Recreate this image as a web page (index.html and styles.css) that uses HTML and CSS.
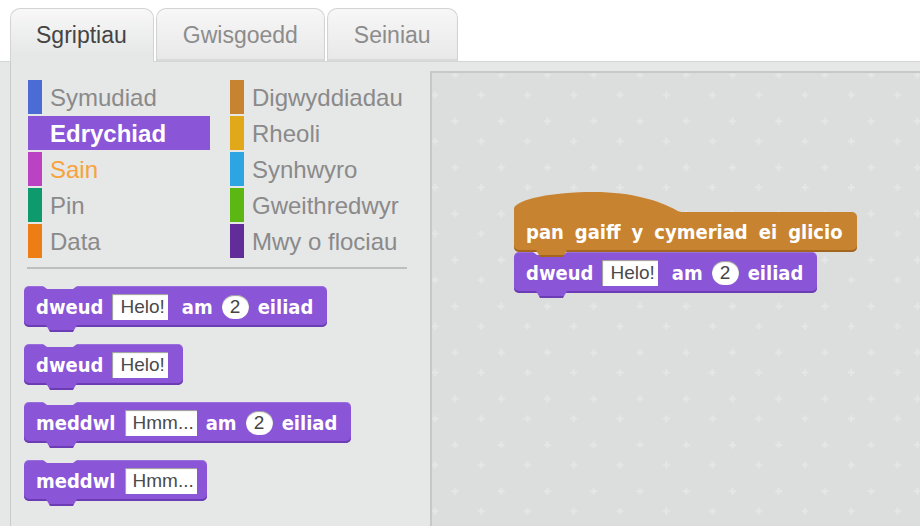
FILE: index.html
```html
<!DOCTYPE html>
<html lang="cy">
<head>
<meta charset="utf-8">
<title>Sgriptiau</title>
<link rel="stylesheet" href="styles.css">
</head>
<body>
<div class="app">
  <div class="tabs">
    <div class="tab active">Sgriptiau</div>
    <div class="tab">Gwisgoedd</div>
    <div class="tab">Seiniau</div>
  </div>
  <div class="pane">
    <div class="palette">
      <div class="cats">
        <div class="cat"><span class="bar c-motion"></span><span class="cat-name">Symudiad</span></div>
        <div class="cat"><span class="bar c-events"></span><span class="cat-name">Digwyddiadau</span></div>
        <div class="cat sel"><span class="bar c-looks"></span><span class="cat-name">Edrychiad</span></div>
        <div class="cat"><span class="bar c-control"></span><span class="cat-name">Rheoli</span></div>
        <div class="cat hover"><span class="bar c-sound"></span><span class="cat-name">Sain</span></div>
        <div class="cat"><span class="bar c-sensing"></span><span class="cat-name">Synhwyro</span></div>
        <div class="cat"><span class="bar c-pen"></span><span class="cat-name">Pin</span></div>
        <div class="cat"><span class="bar c-operators"></span><span class="cat-name">Gweithredwyr</span></div>
        <div class="cat"><span class="bar c-data"></span><span class="cat-name">Data</span></div>
        <div class="cat"><span class="bar c-more"></span><span class="cat-name">Mwy o flociau</span></div>
      </div>
      <div class="sep"></div>
      <div class="blocks">
        <div class="block looks"><span class="lbl">dweud</span><span class="inp inp-short">Helo!</span><span class="lbl">am</span><span class="num">2</span><span class="lbl">eiliad</span></div>
        <div class="block looks"><span class="lbl">dweud</span><span class="inp inp-short">Helo!</span></div>
        <div class="block looks"><span class="lbl">meddwl</span><span class="inp">Hmm...</span><span class="lbl">am</span><span class="num">2</span><span class="lbl">eiliad</span></div>
        <div class="block looks"><span class="lbl">meddwl</span><span class="inp">Hmm...</span></div>
      </div>
    </div>
    <div class="scripts">
      <svg class="grid" width="100%" height="100%" aria-hidden="true">
        <defs>
          <pattern id="crosses" patternUnits="userSpaceOnUse" x="-7" y="-8" width="46.25" height="46.25">
            <path d="M26.5 9h7v2h-7zM29 6.5h2v7h-2zM6.5 29h7v2h-7zM9 26.5h2v7h-2z" fill="#e5e6e6"/>
          </pattern>
        </defs>
        <rect width="100%" height="100%" fill="url(#crosses)"/>
      </svg>
      <div class="stack">
        <div class="block hat events">
          <svg class="hat-top" width="170" height="22" viewBox="0 0 170 22" aria-hidden="true"><path d="M0 22 L0 17 C4 8 38 1 80 1 C118 1 146 10 162 19 C164 20.5 166 21 170 21 L170 22 Z" fill="#c88330"/></svg>
          <span class="lbl">pan</span><span class="lbl">gaiff</span><span class="lbl">y</span><span class="lbl">cymeriad</span><span class="lbl">ei</span><span class="lbl">glicio</span>
        </div>
        <div class="block looks"><span class="lbl">dweud</span><span class="inp inp-short">Helo!</span><span class="lbl">am</span><span class="num">2</span><span class="lbl">eiliad</span></div>
      </div>
    </div>
  </div>
</div>
</body>
</html>
```
FILE: styles.css
```css
html, body {
  margin: 0;
  padding: 0;
  background: #ffffff;
}

body {
  width: 920px;
  height: 526px;
  overflow: hidden;
  font-family: "Liberation Sans", Arial, sans-serif;
}

.app {
  display: flex;
  flex-direction: column;
  height: 526px;
}

/* ---------- tabs ---------- */
.tabs {
  display: flex;
  align-items: flex-start;
  gap: 2px;
  padding: 8px 0 0 10px;
  height: 53px;
  border-bottom: 1px solid #d4d5d5;
}

.tab {
  box-sizing: border-box;
  height: 53px;
  padding: 0 26px;
  display: flex;
  align-items: center;
  border: 1px solid #d3d3d3;
  border-bottom: none;
  border-radius: 10px 10px 0 0;
  background: linear-gradient(#f7f7f7, #e8e8e8);
  box-shadow: inset 0 -2px 1px #d9d9d9;
  font-size: 23px;
  color: #8c8c8c;
}

.tab.active {
  position: relative;
  height: 54px;
  margin-bottom: -1px;
  padding: 0 26px 0 25px;
  color: #444444;
  background: linear-gradient(#f8f8f8, #e6e7e7 85%);
  box-shadow: none;
}

/* ---------- pane ---------- */
.pane {
  flex: 1;
  display: flex;
  background: #e6e7e7;
  min-height: 0;
}

.palette {
  box-sizing: border-box;
  width: 420px;
  margin-left: 10px;
  border-left: 1px solid #c9caca;
  padding: 18px 0 0 17px;
}

.cats {
  display: grid;
  grid-template-columns: 182px 182px;
  grid-auto-rows: 34px;
  column-gap: 20px;
  row-gap: 2px;
}

.cat {
  display: flex;
  align-items: stretch;
}

.bar {
  width: 14px;
  flex: none;
}

.cat-name {
  margin-left: 8px;
  font-size: 24px;
  line-height: 35px;
  color: #8a8a8a;
  white-space: nowrap;
}

.cat.sel {
  background: #8a55d7;
}

.cat.sel .cat-name {
  color: #ffffff;
  font-weight: bold;
}

.cat.hover .cat-name {
  color: #f7a33c;
}

.c-motion { background: #4a6cd4; }
.c-looks { background: #8a55d7; }
.c-sound { background: #bb42c3; }
.c-pen { background: #0e9a6c; }
.c-data { background: #ee7d16; }
.c-events { background: #c88330; }
.c-control { background: #e1a91a; }
.c-sensing { background: #2ca5e2; }
.c-operators { background: #5cb712; }
.c-more { background: #632d99; }

.sep {
  width: 380px;
  height: 2px;
  margin: 9px 0 0 -1px;
  background: #bebebe;
}

.blocks {
  display: flex;
  flex-direction: column;
  align-items: flex-start;
  gap: 17px;
  margin: 17px 0 0 -4px;
}

/* ---------- blocks ---------- */
.block {
  --c: #8a55d7;
  --d: #6c3cb5;
  --bg: #e6e7e7;
  position: relative;
  box-sizing: border-box;
  height: 41px;
  display: inline-flex;
  align-items: center;
  gap: 9px;
  padding: 0 10px 0 12px;
  background: var(--c);
  border-radius: 5px;
  box-shadow: inset 0 -2px 0 var(--d), inset 0 1px 0 rgba(255, 255, 255, 0.15);
  color: #ffffff;
  font-family: "DejaVu Sans Condensed", "DejaVu Sans", Verdana, sans-serif;
  font-stretch: condensed;
  font-weight: bold;
  font-size: 20px;
  white-space: nowrap;
}

.block.events {
  --c: #c88330;
  --d: #a3661f;
}

.block::before {
  content: "";
  position: absolute;
  top: 0;
  left: 19px;
  width: 34px;
  height: 3px;
  background: var(--bg);
  clip-path: polygon(0 0, 100% 0, calc(100% - 4px) 100%, 4px 100%);
}

.block::after {
  content: "";
  position: absolute;
  top: calc(100% - 2px);
  left: 22px;
  width: 31px;
  height: 7px;
  background: linear-gradient(var(--c) 5px, var(--d) 5px);
  clip-path: polygon(0 0, 100% 0, calc(100% - 4px) 100%, 4px 100%);
}

.lbl:last-child {
  margin-right: 4px;
}

.inp {
  box-sizing: border-box;
  height: 26px;
  display: flex;
  align-items: center;
  padding: 0 3px 0 8px;
  background: #ffffff;
  box-shadow: inset 1px 1px 1px rgba(0, 0, 0, 0.4);
  font-family: "Liberation Sans", Arial, sans-serif;
  font-stretch: normal;
  font-weight: normal;
  font-size: 19px;
  color: #4a4a4a;
}

.inp-short {
  margin-right: 5px;
}

.num {
  box-sizing: border-box;
  height: 24px;
  min-width: 27px;
  display: flex;
  align-items: center;
  justify-content: center;
  border-radius: 12px;
  background: #ffffff;
  box-shadow: inset 0 1px 1px rgba(0, 0, 0, 0.4);
  font-family: "Liberation Sans", Arial, sans-serif;
  font-stretch: normal;
  font-weight: normal;
  font-size: 19px;
  color: #444444;
}

/* hat block */
.block.hat {
  z-index: 1;
  height: 40px;
  margin-top: 20px;
  gap: 11px;
  border-radius: 0 5px 5px 5px;
  box-shadow: inset 0 -2px 0 var(--d);
}

.block.hat::before {
  display: none;
}

.hat-top {
  position: absolute;
  left: 0;
  bottom: calc(100% - 1px);
  display: block;
}

/* ---------- scripts area ---------- */
.scripts {
  position: relative;
  flex: 1;
  margin-top: 9px;
  border-top: 2px solid #c7c8c8;
  border-left: 2px solid #c7c8c8;
  background: #dcdddd;
  overflow: hidden;
}

.grid {
  position: absolute;
  inset: 0;
  display: block;
}

.stack {
  position: absolute;
  left: 82px;
  top: 119px;
  display: flex;
  flex-direction: column;
  align-items: flex-start;
}
```
